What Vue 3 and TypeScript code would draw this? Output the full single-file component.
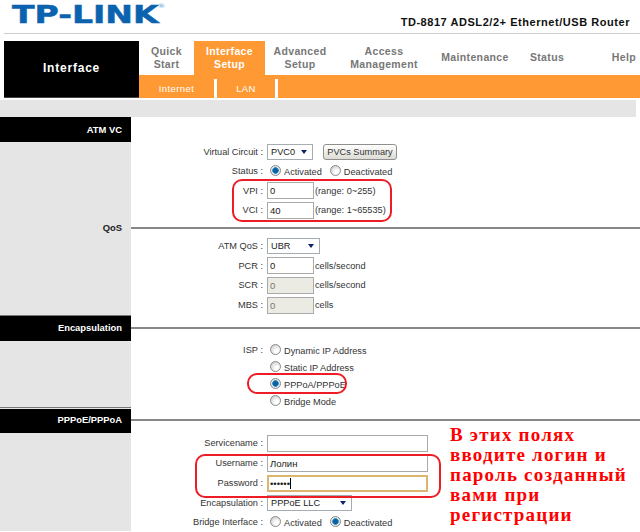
<template>
  <div class="page">
    <header class="brand">
      <div class="logo">TP-LINK<span class="reg">®</span></div>
      <div class="model">TD-8817 ADSL2/2+ Ethernet/USB Router</div>
    </header>

    <nav class="nav">
      <div class="nav-title">Interface</div>
      <div class="nav-main">
        <div class="tabs">
          <div
            v-for="tab in tabs"
            :key="tab.label"
            class="tab"
            :class="{ active: tab.active, end: tab.end }"
            :style="{ width: tab.width + 'px' }"
          >
            <span>{{ tab.label }}</span>
            <span v-if="tab.second">{{ tab.second }}</span>
          </div>
        </div>
        <div class="subnav">
          <span class="sub sub-internet">Internet</span>
          <i class="sep"></i>
          <span class="sub sub-lan">LAN</span>
          <i class="sep"></i>
        </div>
      </div>
    </nav>

    <div class="strip"></div>

    <section>
      <div class="sec-head black plain"><h3>ATM VC</h3></div>
      <div class="sec-body rows-a">
        <div class="side"></div>
        <div class="rows">
          <div class="row">
            <label>Virtual Circuit&nbsp;:</label>
            <div class="select w46"><span>PVC0</span><i class="arrow"></i></div>
            <button class="btn">PVCs Summary</button>
          </div>
          <div class="row">
            <label>Status&nbsp;:</label>
            <input class="radio" type="radio" name="status" checked />
            <span class="opt">Activated</span>
            <input class="radio" type="radio" name="status" />
            <span class="opt">Deactivated</span>
          </div>
          <div class="row">
            <label>VPI&nbsp;:</label>
            <input class="field w47" value="0" />
            <span class="note">(range: 0~255)</span>
          </div>
          <div class="row">
            <label>VCI&nbsp;:</label>
            <input class="field w47" value="40" />
            <span class="note">(range: 1~65535)</span>
          </div>
        </div>
      </div>
    </section>

    <section>
      <div class="sec-head grey"><h3>QoS</h3><hr /></div>
      <div class="sec-body rows-b">
        <div class="side"></div>
        <div class="rows">
          <div class="row">
            <label>ATM QoS&nbsp;:</label>
            <div class="select w53"><span>UBR</span><i class="arrow"></i></div>
          </div>
          <div class="row">
            <label>PCR&nbsp;:</label>
            <input class="field w47" value="0" />
            <span class="note">cells/second</span>
          </div>
          <div class="row">
            <label>SCR&nbsp;:</label>
            <input class="field w47" value="0" disabled />
            <span class="note">cells/second</span>
          </div>
          <div class="row">
            <label>MBS&nbsp;:</label>
            <input class="field w47" value="0" disabled />
            <span class="note">cells</span>
          </div>
        </div>
      </div>
    </section>

    <section>
      <div class="sec-head black"><h3>Encapsulation</h3><hr /></div>
      <div class="sec-body rows-c">
        <div class="side"></div>
        <div class="rows">
          <div v-for="(isp, i) in isps" :key="isp.label" class="row">
            <label>{{ i === 0 ? "ISP\u00a0:" : "" }}</label>
            <input class="radio" type="radio" name="isp" :checked="isp.on" />
            <span class="opt">{{ isp.label }}</span>
          </div>
        </div>
      </div>
    </section>

    <section>
      <div class="sec-head black"><h3>PPPoE/PPPoA</h3><hr /></div>
      <div class="sec-body rows-d">
        <div class="side"></div>
        <div class="rows">
          <div class="row">
            <label>Servicename&nbsp;:</label>
            <input class="field w161" value="" />
          </div>
          <div class="row">
            <label>Username&nbsp;:</label>
            <input class="field w161" value="Лолин" />
          </div>
          <div class="row">
            <label>Password&nbsp;:</label>
            <div class="pass">
              <input class="field w161 focus" type="password" value="123456" />
              <i class="caret"></i>
            </div>
          </div>
          <div class="row">
            <label>Encapsulation&nbsp;:</label>
            <div class="select w85"><span>PPPoE LLC</span><i class="arrow"></i></div>
          </div>
          <div class="row short">
            <label>Bridge Interface&nbsp;:</label>
            <input class="radio" type="radio" name="bridge" />
            <span class="opt">Activated</span>
            <input class="radio" type="radio" name="bridge" checked />
            <span class="opt">Deactivated</span>
          </div>
        </div>
      </div>
    </section>

    <!-- red marks drawn over the form -->
    <div class="mark mark-vpi"></div>
    <div class="mark mark-isp"></div>
    <div class="mark mark-login"></div>
    <div class="hint">
      В этих полях<br />вводите логин и<br />пароль созданный<br />вами при<br />регистрации
    </div>
  </div>
</template>

<script setup lang="ts">
interface Tab {
  label: string;
  second?: string;
  width: number;
  active?: boolean;
  end?: boolean;
}

const tabs: Tab[] = [
  { label: "Quick", second: "Start", width: 55 },
  { label: "Interface", second: "Setup", width: 71, active: true },
  { label: "Advanced", second: "Setup", width: 70 },
  { label: "Access", second: "Management", width: 98 },
  { label: "Maintenance", width: 84 },
  { label: "Status", width: 60 },
  { label: "Help", width: 63, end: true },
];

const isps = [
  { label: "Dynamic IP Address", on: false },
  { label: "Static IP Address", on: false },
  { label: "PPPoA/PPPoE", on: true },
  { label: "Bridge Mode", on: false },
];
</script>

<style scoped>
.page {
  position: relative;
  width: 640px;
  height: 532px;
  overflow: hidden;
  background: #fff;
  font-family: "Liberation Sans", Arial, sans-serif;
  font-size: 9.2px;
  color: #333;
}

.brand {
  display: flex;
  justify-content: space-between;
  align-items: flex-end;
  height: 33px;
  margin-left: 4px;
  padding-right: 10px;
  border-bottom: 1px solid #ccc;
}

.logo {
  position: relative;
  margin: 0 0 8px 8px;
  font-family: "DejaVu Sans", sans-serif;
  font-weight: 700;
  font-size: 24.5px;
  line-height: 20px;
  color: #0b63b0;
  -webkit-text-stroke: 0.5px #0b63b0;
  transform: scaleX(1.35);
  transform-origin: left center;
}

.reg {
  position: absolute;
  top: -3px;
  right: -5px;
  font-size: 6px;
  line-height: 8px;
  font-weight: 400;
  color: #5aa5d8;
  -webkit-text-stroke: 0;
}

.model {
  margin-bottom: 4px;
  font-weight: 700;
  font-size: 11px;
  line-height: 13px;
  color: #111;
  letter-spacing: 0.55px;
}

.nav {
  display: flex;
  height: 57px;
  margin: 7px 0 0 4px;
}

.nav-title {
  flex: none;
  display: flex;
  align-items: center;
  justify-content: center;
  box-sizing: border-box;
  width: 135px;
  padding-bottom: 2px;
  background: #000;
  border-bottom: 1px solid #444;
  color: #fff;
  font-weight: 700;
  font-size: 12px;
  letter-spacing: 0.8px;
}

.nav-main {
  flex: 1;
  min-width: 0;
  display: flex;
  flex-direction: column;
}

.tabs {
  display: flex;
  height: 34px;
}

.tab {
  flex: none;
  display: flex;
  flex-direction: column;
  align-items: center;
  justify-content: center;
  box-sizing: border-box;
  font-weight: 700;
  font-size: 10.5px;
  line-height: 13.5px;
  letter-spacing: 0.35px;
  color: #777;
}

.tab.active {
  background: #ff9933;
  color: #fff;
}

.tab.end {
  align-items: flex-end;
  padding-right: 4px;
}

.subnav {
  display: flex;
  flex: 1;
  background: #ff9933;
  color: #fff;
  font-size: 9.5px;
  letter-spacing: 0.4px;
}

.sub {
  display: flex;
  align-items: center;
  justify-content: center;
  padding-top: 3px;
}

.sub-internet {
  width: 75px;
}

.sub-lan {
  width: 58px;
}

.sep {
  align-self: flex-end;
  width: 3px;
  height: 19px;
  background: #fff;
}

.strip {
  width: 636px;
  height: 17px;
  margin-top: 2px;
  background: #e5e5e5;
}

.sec-head {
  display: grid;
  grid-template-columns: 131px 1fr;
  align-items: center;
}

.sec-head h3 {
  margin: 0;
  padding-right: 9px;
  font-size: 9.4px;
  line-height: 12px;
  font-weight: 700;
  text-align: right;
}

.sec-head hr {
  margin: 0;
  height: 2px;
  border: 0;
  background: #888;
}

.sec-head.black {
  box-sizing: border-box;
  height: 26px;
  background: linear-gradient(90deg, #000 131px, transparent 131px);
}

.sec-head.black::before {
  content: "";
  position: absolute;
  left: 0;
  width: 131px;
  height: 1px;
  margin-top: -25px;
  background: #777;
}

.sec-head.black h3 {
  color: #fff;
}

.sec-head.plain {
  height: 25px;
}

.sec-head.plain::before {
  display: none;
}

.sec-head.grey {
  height: 16px;
  background: linear-gradient(90deg, #e5e5e5 131px, transparent 131px);
}

.sec-head.grey h3 {
  color: #222;
}

.sec-body {
  display: grid;
  grid-template-columns: 131px 1fr;
}

.side {
  background: #e5e5e5;
}

.row {
  display: flex;
  align-items: center;
}

.rows-a .row {
  height: 19.5px;
}

.rows-b .row {
  height: 19.75px;
}

.rows-c {
  height: 66px;
}

.rows-c .row {
  height: 17px;
}

.rows-d .row {
  height: 20px;
}

.rows-d .row.short {
  height: 18px;
}

.row label {
  flex: none;
  width: 132px;
  margin-right: 4px;
  text-align: right;
}

.field {
  box-sizing: border-box;
  height: 17px;
  margin: 0;
  padding: 0 2px;
  border: 1px solid #aaa;
  outline: none;
  background: #fff;
  font: 9.5px "Liberation Sans", Arial, sans-serif;
  color: #222;
}

.field:disabled {
  background: #ebebe4;
  color: #777;
}

.field.focus {
  border: 2px solid #dcb56f;
  padding: 0 1px;
}

.w47 {
  width: 47px;
}

.w161 {
  width: 161px;
}

.note {
  margin-left: 1px;
}

.select {
  position: relative;
  box-sizing: border-box;
  display: flex;
  align-items: center;
  height: 16px;
  padding-left: 3px;
  border: 1px solid #a5acb2;
  background: #fff;
  color: #222;
}

.w46 {
  width: 46px;
}

.w53 {
  width: 53px;
}

.w85 {
  width: 85px;
}

.arrow {
  position: absolute;
  right: 5px;
  top: 5px;
  border-top: 4px solid #0a246a;
  border-left: 3px solid transparent;
  border-right: 3px solid transparent;
}

.btn {
  box-sizing: border-box;
  width: 74px;
  height: 16px;
  margin-left: 10px;
  padding: 0;
  border: 1px solid #8f8f8f;
  border-radius: 3px;
  background: linear-gradient(#fff, #dcdcd4);
  font: 9.2px "Liberation Sans", Arial, sans-serif;
  color: #333;
}

.radio {
  appearance: none;
  flex: none;
  box-sizing: border-box;
  width: 11px;
  height: 11px;
  margin: 0 3px 1px 3px;
  border: 1px solid #8a8a8a;
  border-radius: 50%;
  background: radial-gradient(circle at 65% 70%, #fff 20%, #c8c8c8 90%);
}

.radio:checked {
  background: radial-gradient(circle, #0f5f9e 0 2px, #2b93d0 3px, #e8e8e8 3.6px);
}

.opt {
  margin: 2px 5px 0 0;
}

.pass {
  position: relative;
  display: flex;
}

.caret {
  position: absolute;
  left: 23px;
  top: 3px;
  width: 1px;
  height: 11px;
  background: #000;
}

.mark {
  position: absolute;
  box-sizing: border-box;
  border: 2px solid #ee1c25;
  border-radius: 10px;
}

.mark-vpi {
  left: 232px;
  top: 179px;
  width: 160px;
  height: 43px;
}

.mark-isp {
  left: 247px;
  top: 373px;
  width: 100px;
  height: 21px;
}

.mark-login {
  left: 195px;
  top: 454px;
  width: 246px;
  height: 44px;
}

.hint {
  position: absolute;
  left: 450px;
  top: 425px;
  font-family: "Liberation Serif", "Times New Roman", serif;
  font-weight: 700;
  font-size: 19px;
  line-height: 20px;
  letter-spacing: 1.2px;
  color: #f00;
  white-space: nowrap;
}
</style>
